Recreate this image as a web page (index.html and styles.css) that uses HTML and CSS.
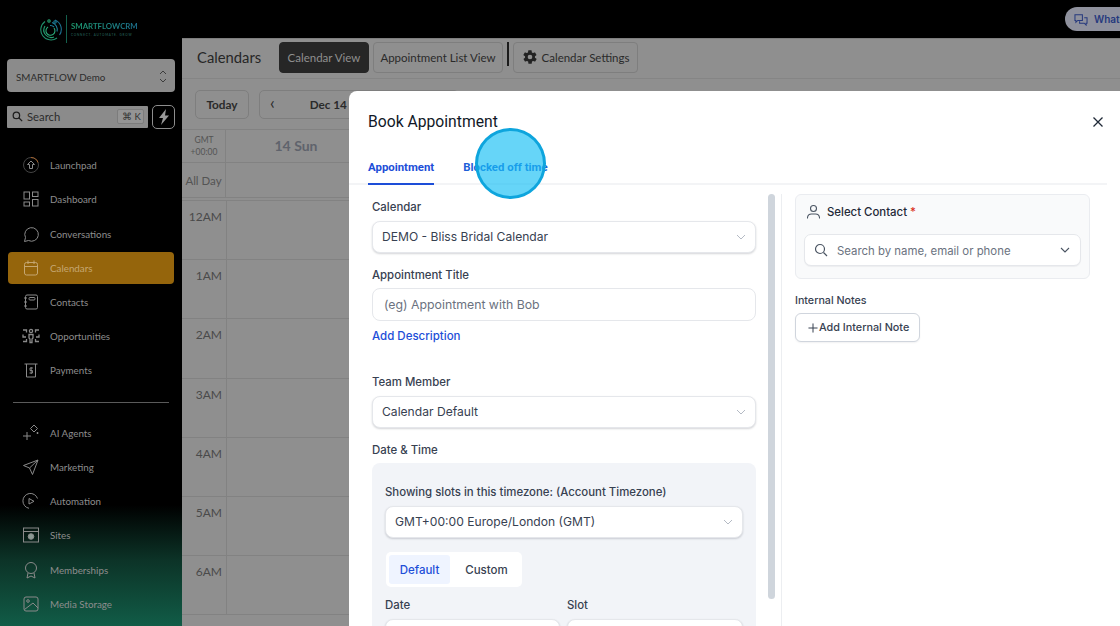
FILE: index.html
```html
<!DOCTYPE html>
<html lang="en">
<head>
<meta charset="utf-8">
<title>Book Appointment</title>
<link rel="stylesheet" href="styles.css">
</head>
<body>
<div class="app">
  <aside class="sidebar">
    <div class="logo">
      <svg class="logo-mark" width="22" height="24" viewBox="0 0 22 24" fill="none" stroke-width="1.100">
        <path d="M5 4.500A10 10 0 1 0 17 21" stroke="#1f8f6a"/>
        <path d="M15 3a10 10 0 0 1 4.500 15" stroke="#1c6f8f"/>
        <path d="M5 9a7.500 7.500 0 0 0 9 11" stroke="#23a070"/>
        <path d="M12 5.500a7.500 7.500 0 0 1 5 9" stroke="#1c7f9a"/>
        <path d="M8 10a4.500 4.500 0 1 0 6 1" stroke="#2aa878"/>
        <path d="M10 8.500a5 5 0 0 1 4 1.500" stroke="#1c7f9a"/>
        <circle cx="9" cy="4" r="1.200" stroke="#2aa878"/><circle cx="15" cy="5" r="1.200" stroke="#1c7f9a"/>
      </svg>
      <span class="logo-rule"></span>
      <div class="logo-text"><span class="logo-name">SMARTFLOWCRM</span><span class="logo-tag">CONNECT. AUTOMATE. GROW</span></div>
    </div>
    <div class="switcher"><span>SMARTFLOW Demo</span>
      <svg width="8" height="15" viewBox="0 0 8 15" fill="none" stroke="#3c3c3c" stroke-width="1"><path d="M1 5l3-3 3 3M1 10l3 3 3-3"/></svg>
    </div>
    <div class="search-row">
      <div class="search">
        <svg width="11" height="11" viewBox="0 0 13 13" fill="none" stroke="#1e1e1e" stroke-width="1.500"><circle cx="5.200" cy="5.200" r="3.800"/><path d="M8 8l4 4"/></svg>
        <span class="search-label">Search</span><span class="kbd">⌘ K</span>
      </div>
      <div class="bolt"><svg width="12" height="16" viewBox="0 0 12 16" fill="#9a9a9a"><path d="M8 0L1 9h4l-2 7 8-9.500H7z"/></svg></div>
    </div>
    <nav class="nav nav-top">
      <a class="nav-item"><svg class="ico" viewBox="0 0 18 18"><circle cx="9" cy="9" r="7.500" stroke="#444"/><path d="M9 1.500a7.500 7.500 0 0 1 7 5" stroke="#a4622c"/><path d="M9 5l3.500 3.500h-2v4h-3v-4h-2z"/></svg>Launchpad</a>
      <a class="nav-item"><svg class="ico" viewBox="0 0 18 18"><rect x="2" y="2" width="5.500" height="7"/><rect x="10.500" y="2" width="5.500" height="4.500"/><rect x="2" y="12" width="5.500" height="4"/><rect x="10.500" y="9.500" width="5.500" height="6.500"/></svg>Dashboard</a>
      <a class="nav-item"><svg class="ico" viewBox="0 0 18 18"><path d="M3.500 12.500A6.800 6.800 0 1 1 6.500 15.500L2.500 16.500z"/></svg>Conversations</a>
      <a class="nav-item active"><svg class="ico" viewBox="0 0 18 18"><rect x="2.500" y="3.500" width="13" height="12.500" rx="2"/><path d="M2.500 7.500h13M6 1.500v3.500M12 1.500v3.500"/></svg>Calendars</a>
      <a class="nav-item"><svg class="ico" viewBox="0 0 18 18"><rect x="3.500" y="2" width="12" height="14" rx="1.500"/><rect x="7" y="4.500" width="6" height="2.500" rx="1"/><path d="M2 5h3M2 9h3M2 13h3"/></svg>Contacts</a>
      <a class="nav-item"><svg class="ico ico-thick" viewBox="0 0 18 18"><circle cx="9" cy="4" r="1.600"/><path d="M7 7.500h4v3.500l-1 1v3.500H8V12l-1-1zM1 3h3.500v2.500M17 3h-3.500v2.500M1 14.500h3.500V12M17 14.500h-3.500V12M1 7.500v2.500h3M17 7.500v2.500h-3"/></svg>Opportunities</a>
      <a class="nav-item"><svg class="ico" viewBox="0 0 18 18"><path d="M2.500 3h13M4.500 3v13h9V3"/><path d="M11 7H8v2.500h2.500V12H7.500M9.200 6v7" stroke-width=".9"/></svg>Payments</a>
    </nav>
    <div class="nav-rule"></div>
    <nav class="nav">
      <a class="nav-item"><svg class="ico" viewBox="0 0 18 18"><path d="M12 1l3.500 3.500L12 8 8.500 4.500zM5 8v8M1 12h8M15.500 8v2M14.500 9h2"/></svg>AI Agents</a>
      <a class="nav-item"><svg class="ico" viewBox="0 0 18 18"><path d="M16 2L1.500 7.500l6 2.500 3 6.500zM7.500 10L16 2"/></svg>Marketing</a>
      <a class="nav-item"><svg class="ico" viewBox="0 0 18 18"><path d="M15.500 6.500A7.500 7.500 0 1 0 7 16.300"/><path d="M7 6.500l5 2.800-5 2.700z"/></svg>Automation</a>
      <a class="nav-item"><svg class="ico" viewBox="0 0 18 18"><rect x="1.500" y="2" width="15" height="14"/><path d="M1.500 5.500h15"/><circle cx="9" cy="10.500" r="2.800" fill="#8a9a94"/></svg>Sites</a>
      <a class="nav-item"><svg class="ico" viewBox="0 0 18 18"><circle cx="9" cy="7" r="5.500"/><path d="M6 12l-1 5 4-2 4 2-1-5"/></svg>Memberships</a>
      <a class="nav-item"><svg class="ico" viewBox="0 0 18 18"><rect x="2" y="2" width="14" height="14" rx="2"/><circle cx="6" cy="6" r="1.300"/><path d="M2.500 14.500L11 8l5 5"/></svg>Media Storage</a>
    </nav>
  </aside>

  <div class="content">
    <header class="topbar">
      <div class="whats-new">
        <svg width="14" height="13" viewBox="0 0 15 14" fill="none" stroke="#26397d" stroke-width="1.100"><path d="M1 2h8v6H4L2 10V8H1zM11 5h3v6h-1v2l-2-2H6V9"/></svg>
        <span>What's New</span>
      </div>
    </header>
    <section class="pagebar">
      <h1 class="page-title">Calendars</h1>
      <button class="tab-btn tab-btn-dark">Calendar View</button>
      <button class="tab-btn tab-btn-list">Appointment List View</button>
      <span class="pagebar-rule"></span>
      <button class="tab-btn tab-btn-icon">
        <svg width="16" height="16" viewBox="0 0 24 24" fill="#222"><path d="M19.400 13a7.600 7.600 0 0 0 0-2l2.100-1.600a.5.5 0 0 0 .1-.6l-2-3.500a.5.5 0 0 0-.6-.2l-2.500 1a7.300 7.300 0 0 0-1.700-1l-.4-2.700a.5.5 0 0 0-.5-.4h-4a.5.5 0 0 0-.5.400l-.4 2.700a7.300 7.300 0 0 0-1.700 1l-2.500-1a.5.5 0 0 0-.6.200l-2 3.500a.5.5 0 0 0 .1.600L4.600 11a7.600 7.600 0 0 0 0 2l-2.100 1.600a.5.500 0 0 0-.1.600l2 3.500a.5.500 0 0 0 .6.200l2.500-1c.5.400 1.100.7 1.700 1l.4 2.700c0 .2.200.4.500.4h4c.3 0 .5-.2.500-.4l.4-2.700c.6-.3 1.200-.6 1.700-1l2.500 1a.5.500 0 0 0 .6-.2l2-3.500a.5.500 0 0 0-.1-.6zM12 15.500a3.500 3.500 0 1 1 0-7 3.500 3.500 0 0 1 0 7z"/></svg>
        Calendar Settings
      </button>
    </section>
    <section class="toolbar">
      <button class="today">Today</button>
      <div class="date-nav"><span class="chev">‹</span><span class="date-text">Dec 14</span></div>
    </section>
    <section class="grid">
      <div class="grid-head">
        <div class="tz"><span>GMT</span><span>+00:00</span></div>
        <div class="day">14 Sun</div>
      </div>
      <div class="grid-allday"><div class="all-label">All Day</div><div></div></div>
      <div class="hours">
        <div class="hour"><span class="hour-label">12AM</span></div>
        <div class="hour"><span class="hour-label">1AM</span></div>
        <div class="hour"><span class="hour-label">2AM</span></div>
        <div class="hour"><span class="hour-label">3AM</span></div>
        <div class="hour"><span class="hour-label">4AM</span></div>
        <div class="hour"><span class="hour-label">5AM</span></div>
        <div class="hour"><span class="hour-label">6AM</span></div>
      </div>
    </section>
  </div>
</div>

<div class="modal">
  <div class="modal-head">
    <h2 class="modal-title">Book Appointment</h2>
    <svg class="close" width="12" height="12" viewBox="0 0 12 12" fill="none" stroke="#1f2937" stroke-width="1.300"><path d="M1.500 1.500l9 9M10.500 1.500l-9 9"/></svg>
  </div>
  <div class="modal-tabs">
    <span class="modal-tab on">Appointment</span>
    <span class="modal-tab">Blocked off time</span>
  </div>
  <div class="modal-body">
    <div class="form">
      <label class="lbl">Calendar</label>
      <div class="field raised"><span>DEMO - Bliss Bridal Calendar</span><svg class="caret" width="10" height="6" viewBox="0 0 10 6" fill="none" stroke="#b4bac4"><path d="M1 1l4 4 4-4"/></svg></div>
      <label class="lbl lbl-title">Appointment Title</label>
      <div class="field placeholder"><span>(eg) Appointment with Bob</span></div>
      <a class="add-desc">Add Description</a>
      <label class="lbl lbl-team">Team Member</label>
      <div class="field raised"><span>Calendar Default</span><svg class="caret" width="10" height="6" viewBox="0 0 10 6" fill="none" stroke="#b4bac4"><path d="M1 1l4 4 4-4"/></svg></div>
      <label class="lbl lbl-date">Date &amp; Time</label>
      <div class="panel">
        <div class="lbl panel-lbl">Showing slots in this timezone: (Account Timezone)</div>
        <div class="field raised"><span>GMT+00:00 Europe/London (GMT)</span><svg class="caret" width="10" height="6" viewBox="0 0 10 6" fill="none" stroke="#b4bac4"><path d="M1 1l4 4 4-4"/></svg></div>
        <div class="seg"><span class="seg-item on">Default</span><span class="seg-item">Custom</span></div>
        <div class="two">
          <div><div class="lbl">Date</div><div class="field raised"></div></div>
          <div><div class="lbl">Slot</div><div class="field raised"></div></div>
        </div>
      </div>
    </div>
    <div class="scrollbar"></div>
    <div class="side">
      <div class="contact">
        <div class="contact-title">
          <svg width="15" height="16" viewBox="0 0 15 16" fill="none" stroke="#4b5563" stroke-width="1.100"><circle cx="7.500" cy="4.500" r="3"/><path d="M1.500 14.500v-1a4 4 0 0 1 4-3.500h4a4 4 0 0 1 4 3.500v1"/></svg>
          <span>Select Contact <em>*</em></span>
        </div>
        <div class="contact-input">
          <svg width="14" height="14" viewBox="0 0 14 14" fill="none" stroke="#4b5563" stroke-width="1.200"><circle cx="6" cy="6" r="4.500"/><path d="M9.500 9.500L13 13"/></svg>
          <span>Search by name, email or phone</span>
          <svg class="caret" width="10" height="6" viewBox="0 0 10 6" fill="none" stroke="#4b5563" stroke-width="1.100"><path d="M1 1l4 4 4-4"/></svg>
        </div>
      </div>
      <div class="notes-lbl">Internal Notes</div>
      <button class="add-note"><svg width="10" height="10" viewBox="0 0 11 11" fill="none" stroke="#374151" stroke-width="1.100"><path d="M5.500 0.500v10M0.500 5.500h10"/></svg>Add Internal Note</button>
    </div>
  </div>
</div>
<div class="click-mark"></div>
</body>
</html>
```
FILE: styles.css
```css
* { box-sizing: border-box; }
html, body { margin: 0; padding: 0; height: 626px; overflow: hidden; }
body { font-family: "Inter", "Liberation Sans", sans-serif; background: #000; }
.app { display: flex; width: 1120px; height: 626px; }

/* Sidebar */
.sidebar { width: 182px; flex: none; height: 626px; overflow: hidden; font-family: "Lato", sans-serif;
  background: linear-gradient(180deg, #000 0, #000 505px, #0c3327 560px, #115c47 626px); }
.logo { height: 59px; display: flex; align-items: center; padding: 0 0 1px 40px; }
.logo-rule { width: 1px; height: 28px; background: #14604d; margin: 0 4px; }
.logo-text { display: flex; flex-direction: column; gap: 4px; }
.logo-name { font-size: 7.800px; line-height: 8px; font-weight: 700; width: 68px; white-space: nowrap;
  background: linear-gradient(90deg, #1d9a6e, #1c6f8f); -webkit-background-clip: text; background-clip: text; color: transparent; }
.logo-tag { font-size: 3px; line-height: 3px; color: #2a6d62; letter-spacing: .8px; white-space: nowrap; }
.switcher { margin: 0 7px; height: 33px; background: #8b8b8b; border-radius: 4px; display: flex; align-items: center;
  justify-content: space-between; padding: 2px 8px 0 9px; font-size: 9.800px; color: #2b2b2b; }
.search-row { margin: 13px 7px 0; display: flex; gap: 4px; height: 24px; }
.search { flex: 1; background: #8b8b8b; height: 22px; margin-top: 1px; border-radius: 1px; display: flex; align-items: center; padding: 0 4px 1px 5px; color: #2b2b2b; }
.search-label { font-size: 11.300px; margin-left: 4px; flex: 1; }
.kbd { font-size: 9.500px; border: 1px solid #7c7c7c; background: #949494; border-radius: 2px; padding: 0 4px; height: 15px; line-height: 13px; color: #333; width: 27px; white-space: nowrap; }
.bolt { width: 23px; height: 24px; border: 1px solid #8d8d8d; border-radius: 5px; display: flex; align-items: center; justify-content: center; }
.nav { display: flex; flex-direction: column; gap: 1.700px; margin: 0 8px; }
.nav-top { margin-top: 20px; }
.nav-item { display: flex; align-items: center; gap: 10px; height: 32.500px; padding-left: 14px; width: 166px; font-size: 9.800px; color: #8d8d8d; border-radius: 4px; }
.nav-item.active { background: #95650c; color: #c5a772; }
.ico { width: 18px; height: 18px; flex: none; fill: none; stroke: #8a8a8a; stroke-width: 1; }
.ico-thick { stroke-width: 1.300; }
.active .ico { stroke: #c5a772; }
.nav-rule { height: 1px; background: #5a5a5a; margin: 15px 13px 14px; width: 156px; }

/* Main */
.content { flex: 1; min-width: 0; display: flex; flex-direction: column; font-family: "Lato", sans-serif; }
.topbar { height: 38px; background: #000; display: flex; align-items: flex-start; justify-content: flex-end; padding-top: 7px; overflow: hidden; }
.whats-new { width: 55px; height: 24px; background: #8f919d; border-radius: 12px 0 0 12px; display: flex; align-items: center; gap: 6px; padding-left: 9px; overflow: hidden; white-space: nowrap;
  font-family: "Inter", sans-serif; font-size: 10px; font-weight: 600; color: #26397d; flex: none; }
.whats-new svg { flex: none; }
.pagebar { height: 41px; background: #8f8f8f; border-bottom: 1px solid #858585; border-top: 1px solid #7d7d7d; display: flex; align-items: center; padding: 0 0 3px 15px; }
.page-title { font-size: 14.800px; font-weight: 400; color: #262626; margin: 0 17px 0 0; width: 65px; white-space: nowrap; }
.tab-btn { height: 31px; width: 90px; flex: none; border: 1px solid #7e7e7e; background: #8f8f8f; border-radius: 4px; font-family: "Lato", sans-serif; font-size: 11.500px; color: #2a2a2a; padding: 0; margin-right: 4px; white-space: nowrap; display: flex; align-items: center; justify-content: center; gap: 4px; }
.tab-btn-dark { background: #262626; border-color: #262626; color: #8f8f8f; }
.tab-btn-list { width: 130px; }
.pagebar-rule { width: 2px; height: 24px; background: #1c1c1c; margin: -7px 4px 0 0; flex: none; }
.tab-btn-icon { width: 125px; }
.toolbar { height: 50px; background: #8f8f8f; display: flex; align-items: center; padding-left: 13px; gap: 10px; }
.today { width: 54px; height: 29px; border: 1px solid #7e7e7e; border-radius: 5px; background: #8f8f8f; font-family: "Lato", sans-serif; font-weight: 700; font-size: 11.800px; color: #2a2a2a; }
.date-nav { width: 200px; height: 29px; border: 1px solid #7e7e7e; border-radius: 5px; display: flex; align-items: center; padding-left: 10px; font-size: 11.700px; font-weight: 700; color: #2a2a2a; }
.chev { font-size: 17px; line-height: 24px; height: 26px; font-weight: 400; }
.date-text { margin-left: 35px; }
.grid { flex: 1; background: #8f8f8f; overflow: hidden; color: #545454; }
.grid-head { display: flex; height: 34px; border-top: 1px solid #828282; border-bottom: 1px solid #828282; }
.tz { width: 44px; border-right: 1px solid #828282; display: flex; flex-direction: column; align-items: center; justify-content: center; font-size: 8.500px; line-height: 12px; padding-left: 1px; }
.day { width: 140px; text-align: center; font-size: 14px; font-weight: 700; color: #5f636c; line-height: 32px; }
.grid-allday { display: flex; height: 35px; border-bottom: 1px solid #828282; }
.all-label { width: 44px; border-right: 1px solid #828282; font-size: 11.500px; line-height: 35px; text-align: center; }
.hours { display: flex; flex-direction: column; margin-top: 2px; border-top: 1px solid #828282; }
.hour { height: 59.200px; flex: none; border-bottom: 1px solid #828282; position: relative; display: flex; }
.hour::before { content: ""; width: 44px; border-right: 1px solid #828282; flex: none; }
.hour-label { position: absolute; left: 0; width: 40px; text-align: right; top: 8px; font-size: 12px; color: #4a4a4a; }

/* Modal */
.modal { position: absolute; left: 349px; top: 91px; width: 771px; height: 535px; background: #fff; border-radius: 8px 0 0 0; overflow: hidden; color: #374151; }
.modal-head { height: 57px; display: flex; align-items: flex-start; justify-content: space-between; padding: 21px 16px 0 19px; }
.modal-title { margin: 0; font-family: "Roboto", sans-serif; font-size: 15.700px; line-height: 20px; font-weight: 400; color: #111827; }
.close { margin-top: 4px; }
.modal-tabs { margin-right: 13px; height: 37px; border-bottom: 2px solid #f3f4f6; display: flex; gap: 29px; padding-left: 19px; }
.modal-tab { font-family: "Roboto", sans-serif; font-size: 11.400px; font-weight: 700; color: #1d5fd8; height: 37px; line-height: 38px; }
.modal-tab.on { color: #1d4ed8; border-bottom: 2px solid #1d4ed8; }
.modal-body { display: flex; padding-top: 9px; }
.form { width: 384px; margin-left: 23px; flex: none; }
.lbl { display: block; font-size: 11.400px; line-height: 14px; color: #374151; font-weight: 500; margin-top: 6px; margin-bottom: 7px; }
.field { height: 32px; background: #fff; border: 1px solid #e5e7eb; border-radius: 8px; display: flex; align-items: center; justify-content: space-between; padding: 0 9px 1px; font-size: 12.100px; color: #374151; }
.raised { box-shadow: 0 1px 2px rgba(16,24,40,.18); }
.placeholder { color: #6b7280; padding-left: 11px; height: 33px; font-size: 12.300px; }
.lbl-title { margin-top: 15px; margin-bottom: 6px; }
.add-desc { display: block; margin-top: 8px; font-size: 11.500px; line-height: 15px; color: #1d4ed8; font-weight: 500; }
.lbl-team { margin-top: 31px; margin-bottom: 7px; }
.lbl-date { margin-top: 15px; margin-bottom: 6px; }
.panel { background: #f2f4f8; border-radius: 8px; padding: 22px 13px 20px; height: 200px; }
.panel-lbl { margin: 0 0 7px; }
.seg { margin: 14px 0 0 1px; width: 136px; height: 35px; background: #fff; border-radius: 5px; padding: 3px; display: flex; }
.seg-item { width: 62px; height: 29px; font-size: 11.500px; line-height: 31px; text-align: center; color: #374151; font-weight: 500; border-radius: 3px; }
.seg-item + .seg-item { width: 70px; padding-left: 4px; }
.seg-item.on { background: #eff4ff; color: #1d4ed8; }
.two { display: grid; grid-template-columns: 175px 176px; gap: 7px; margin-top: 5px; }
.two .lbl { margin-bottom: 7px; }
.scrollbar { width: 7px; height: 405px; background: #cfd5dc; border-radius: 4px; margin-left: 12px; flex: none; }
.side { margin-left: 6px; border-left: 1px solid #eceef1; padding-left: 13px; width: 310px; flex: none; height: 440px; }
.contact { width: 295px; height: 85px; background: #f9fafb; border: 1px solid #eaecf0; border-radius: 6px; padding: 9px 8px 0; }
.contact-title { display: flex; align-items: center; gap: 6px; height: 16px; padding-left: 2px; font-size: 11.400px; font-weight: 500; color: #1f2937; }
.contact-title em { font-style: normal; color: #d92d20; }
.contact-input { margin-top: 14px; height: 32px; background: #fff; border: 1px solid #e5e7eb; border-radius: 7px; display: flex; align-items: center; padding: 0 10px 0 9px; font-size: 11.400px; color: #6b7280; box-shadow: 0 1px 1px rgba(16,24,40,.05); }
.contact-input span { flex: 1; margin-left: 9px; padding-top: 1px; }
.notes-lbl { margin-top: 15px; font-size: 10.700px; line-height: 14px; font-weight: 500; color: #374151; }
.add-note { margin-top: 5px; width: 125px; height: 29px; border: 1px solid #d0d5dd; background: #fff; border-radius: 6px; font-family: "Inter", sans-serif; font-size: 10.800px; font-weight: 500; color: #374151; display: flex; align-items: center; padding: 0 0 0 12px; gap: 1px; box-shadow: 0 1px 2px rgba(16,24,40,.06); white-space: nowrap; }

/* Click highlight */
.click-mark { position: absolute; left: 475px; top: 127.500px; width: 70.500px; height: 71px; border-radius: 50%; border: 3.500px solid #0ea5dd; background: rgba(20,190,245,.65); }
```
